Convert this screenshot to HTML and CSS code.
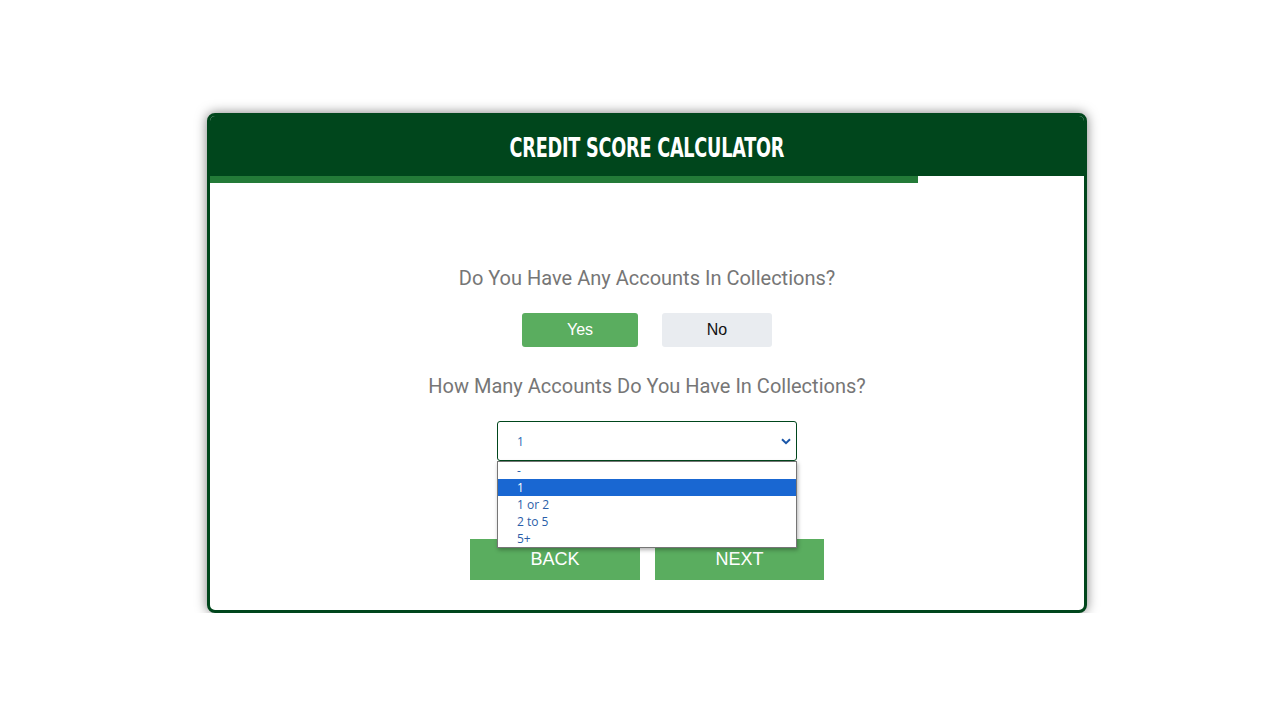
FILE: index.html
```html
<!DOCTYPE html>
<html>
<head>
<meta charset="utf-8">
<link rel="stylesheet" href="styles.css">
</head>
<body>
<div class="page">
  <div class="card">
    <div class="card-header"><h1 class="title">CREDIT SCORE CALCULATOR</h1></div>
    <div class="progress"><div class="progress-fill" style="width:81%"></div></div>
    <div class="card-body">
      <p class="question">Do You Have Any Accounts In Collections?</p>
      <div class="choices">
        <button class="choice choice-yes">Yes</button>
        <button class="choice choice-no">No</button>
      </div>
      <p class="question q2">How Many Accounts Do You Have In Collections?</p>
      <div class="select-wrap">
        <div class="select">
          <span class="select-value">1</span>
          <svg class="chev" width="10" height="7" viewBox="0 0 10 7"><path d="M1 1.2 L5 5.2 L9 1.2" fill="none" stroke="#1a56a8" stroke-width="2"/></svg>
        </div>
        <ul class="options">
          <li class="opt">-</li>
          <li class="opt active">1</li>
          <li class="opt">1 or 2</li>
          <li class="opt">2 to 5</li>
          <li class="opt">5+</li>
        </ul>
      </div>
      <div class="nav">
        <button class="nav-btn">BACK</button>
        <button class="nav-btn">NEXT</button>
      </div>
    </div>
  </div>
</div>
</body>
</html>
```
FILE: styles.css
```css
* { box-sizing: border-box; }
html, body { margin: 0; padding: 0; background: #fff; }
body { font-family: Roboto, "Liberation Sans", sans-serif; }
.page {
  display: flex;
  justify-content: center;
  padding: 113px 0 0 14px;
}
.card {
  width: 880px;
  height: 500px;
  border: 3px solid #00461c;
  border-radius: 8px;
  box-shadow: 0 0 12px rgba(0,0,0,0.5);
  background: #fff;
  overflow: hidden;
  display: flex;
  flex-direction: column;
}
.card-header {
  background: #00461c;
  height: 63px;
  margin: -3px -3px 0;
  flex-shrink: 0;
  display: flex;
  align-items: center;
  justify-content: center;
}
.title {
  margin: 6px 0 0 0;
  color: #fff;
  font-family: "DejaVu Sans", sans-serif;
  font-stretch: condensed;
  font-weight: bold;
  font-size: 26px;
  letter-spacing: -0.3px;
  transform: scaleX(0.755);
  white-space: nowrap;
}
.progress { height: 7px; background: #fff; flex-shrink: 0; }
.progress-fill { height: 7px; background: #237a38; }
.card-body {
  flex: 1;
  display: flex;
  flex-direction: column;
  align-items: center;
  padding-top: 83px;
}
.question {
  margin: 0;
  font-family: Roboto, sans-serif;
  font-size: 20px;
  line-height: 24px;
  color: #767676;
}
.choices {
  display: flex;
  gap: 24px;
  margin-top: 23px;
}
.choice {
  height: 34px;
  border: none;
  border-radius: 3px;
  font-family: "Liberation Sans", Arial, sans-serif;
  font-size: 16px;
  padding: 0;
}
.choice-yes { width: 116px; background: #5aad5f; color: #fff; }
.choice-no { width: 110px; background: #e9ecf0; color: #111; }
.q2 { margin-top: 27px; }
.select-wrap {
  position: relative;
  width: 300px;
  margin-top: 23px;
}
.select {
  height: 40px;
  border: 1px solid #00461c;
  border-radius: 3px;
  display: flex;
  align-items: center;
  justify-content: space-between;
  padding: 0 5px 0 19px;
  font-family: "Open Sans", sans-serif;
  font-size: 12px;
  color: #2a6bb5;
}
.chev { margin-top: 1px; }
.options {
  position: absolute;
  left: 0;
  top: 40px;
  width: 300px;
  margin: 0;
  padding: 0;
  list-style: none;
  background: #fff;
  border: 1px solid #767676;
  box-shadow: 1px 2px 4px rgba(0,0,0,0.3);
  z-index: 5;
}
.opt {
  height: 17px;
  line-height: 17px;
  padding-left: 19px;
  font-family: "Open Sans", sans-serif;
  font-size: 12px;
  color: #2a5ea8;
}
.opt.active { background: #1967d2; color: #fff; }
.nav {
  display: flex;
  gap: 15px;
  margin-top: 78px;
}
.nav-btn {
  width: 170px;
  height: 41px;
  border: none;
  background: #5aad5f;
  color: #fff;
  font-family: "Liberation Sans", Arial, sans-serif;
  font-size: 18px;
  padding: 0;
}
.nav-btn + .nav-btn { width: 169px; }
```
